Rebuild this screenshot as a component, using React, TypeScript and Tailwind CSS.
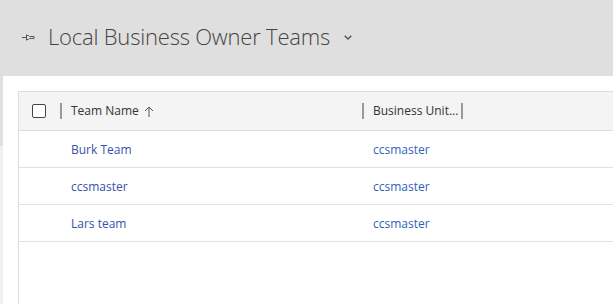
const rows = [
  { name: "Burk Team", unit: "ccsmaster" },
  { name: "ccsmaster", unit: "ccsmaster" },
  { name: "Lars team", unit: "ccsmaster" },
];

function PinIcon() {
  return (
    <svg width="14" height="8" viewBox="0 0 14 8" fill="none" stroke="#555" strokeWidth="1">
      <path d="M0 4.5h4.5M4.5 1.5v6M4.5 2.5h2l1 1h4.5v2h-4.5l-1 1h-2" />
    </svg>
  );
}

export default function App() {
  return (
    <div className="w-[613px] h-[304px] overflow-hidden bg-[#dfdfdf] font-['Open_Sans',sans-serif]">
      <div className="h-[76px] flex items-center pl-[22px] pb-[3px]">
        <PinIcon />
        <span className="ml-[12px] text-[22px] font-light text-[#444] tracking-[-0.2px]">
          Local Business Owner Teams
        </span>
        <svg className="ml-[14px] mt-[2px]" width="8" height="5" viewBox="0 0 8 5" fill="none" stroke="#555" strokeWidth="1.4">
          <path d="M0.7 0.7l3.3 3.3 3.3-3.3" />
        </svg>
      </div>
      <div className="flex h-[228px]">
        <div className="w-[3px] flex flex-col">
          <div className="h-[70px] bg-[#dfdfdf]" />
          <div className="flex-1 bg-[#f0f0f0]" />
        </div>
        <div className="flex-1 bg-white pt-[15px] pl-[15px]">
          <div className="h-full border-l border-t border-[#dedede]">
            <div className="h-[39px] bg-[#f4f4f4] border-b border-[#dcdcdc] flex items-center text-[12px] text-[#333] font-medium">
              <div className="w-[14px] h-[14px] ml-[13px] border border-[#444] rounded-[2px] bg-white" />
              <div className="w-[2px] h-[16px] bg-[#999] ml-[14px]" />
              <div className="flex items-center w-[300px] pl-[9px]">
                <span>Team Name</span>
                <svg className="ml-[5px]" width="10" height="11" viewBox="0 0 10 11" fill="none" stroke="#555" strokeWidth="1">
                  <path d="M5 1v10M1 5l4-4 4 4" />
                </svg>
              </div>
              <div className="w-[2px] h-[16px] bg-[#999]" />
              <span className="ml-[9px]">Business Unit...</span>
              <div className="w-[2px] h-[16px] bg-[#999] ml-[3px]" />
            </div>
            {rows.map((r) => (
              <div key={r.name} className="h-[37px] pt-[1px] border-b border-[#e1e1e1] flex items-center text-[12px]">
                <span className="w-[354px] shrink-0 pl-[52px] text-[#3552aa]">{r.name}</span>
                <span className="text-[#2f62b8]">{r.unit}</span>
              </div>
            ))}
          </div>
        </div>
      </div>
    </div>
  );
}
